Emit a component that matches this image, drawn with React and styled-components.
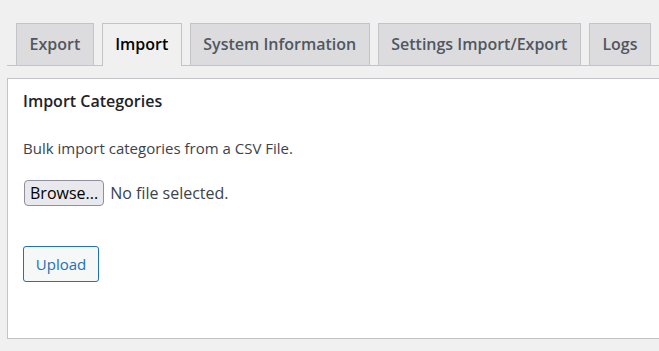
import React from 'react'
import styled, { createGlobalStyle } from 'styled-components'

const GlobalStyle = createGlobalStyle`
  html, body {
    margin: 0;
    padding: 0;
    background: #f0f0f1;
    overflow: hidden;
  }
  body {
    font-family: "Open Sans", "Noto Sans", "Liberation Sans", sans-serif;
    color: #3c434a;
  }
`

const Page = styled.div`
  padding: 23px 0 0 7px;
  width: 720px;
`

const TabBar = styled.nav`
  display: flex;
  align-items: flex-end;
  gap: 8px;
  padding-left: 9px;
  border-bottom: 1px solid #c3c4c7;
`

const Tab = styled.a`
  display: block;
  box-sizing: border-box;
  line-height: 41px;
  padding: 0 12.5px;
  font-size: 16px;
  font-weight: 600;
  text-decoration: none;
  white-space: nowrap;
  border: 1px solid #c3c4c7;
  border-bottom: none;
  background: ${p => (p.$active ? '#f0f0f1' : '#dcdcde')};
  color: ${p => (p.$active ? '#000' : '#50575e')};
  margin-bottom: ${p => (p.$active ? '-1px' : '0')};
  height: ${p => (p.$active ? '43px' : '42px')};
  cursor: pointer;
`

const Panel = styled.section`
  margin-top: 12px;
  box-sizing: border-box;
  height: 261px;
  background: #fff;
  border: 1px solid #c3c4c7;
  padding: 11px 15px 0;
`

const Heading = styled.h3`
  margin: 0;
  font-size: 16px;
  line-height: 22px;
  font-weight: 600;
  color: #1d2327;
`

const Text = styled.p`
  margin: 25px 0 0;
  font-size: 15px;
  line-height: 22px;
`

const FileRow = styled.div`
  display: flex;
  align-items: center;
  gap: 6px;
  margin-top: 21px;
  font-size: 16px;
`

const BrowseButton = styled.button`
  box-sizing: border-box;
  height: 26px;
  margin-left: 1px;
  padding: 0 5px;
  background: #e9e9ed;
  border: 1px solid #8f8f9d;
  border-radius: 4px;
  font-family: inherit;
  font-size: 16px;
  color: #000;
`

const FileName = styled.span`
  color: #3c434a;
`

const UploadButton = styled.button`
  display: block;
  box-sizing: border-box;
  margin-top: 40px;
  width: 76px;
  height: 36px;
  background: #f6f7f7;
  border: 1px solid #2271b1;
  border-radius: 3px;
  color: #2271b1;
  font-family: inherit;
  font-size: 15px;
  cursor: pointer;
`

const tabs = ['Export', 'Import', 'System Information', 'Settings Import/Export', 'Logs']

export default function App() {
  return (
    <>
      <GlobalStyle />
      <Page>
        <TabBar>
          {tabs.map(t => (
            <Tab key={t} $active={t === 'Import'}>{t}</Tab>
          ))}
        </TabBar>
        <Panel>
          <Heading>Import Categories</Heading>
          <Text>Bulk import categories from a CSV File.</Text>
          <FileRow>
            <BrowseButton>Browse...</BrowseButton>
            <FileName>No file selected.</FileName>
          </FileRow>
          <UploadButton>Upload</UploadButton>
        </Panel>
      </Page>
    </>
  )
}
